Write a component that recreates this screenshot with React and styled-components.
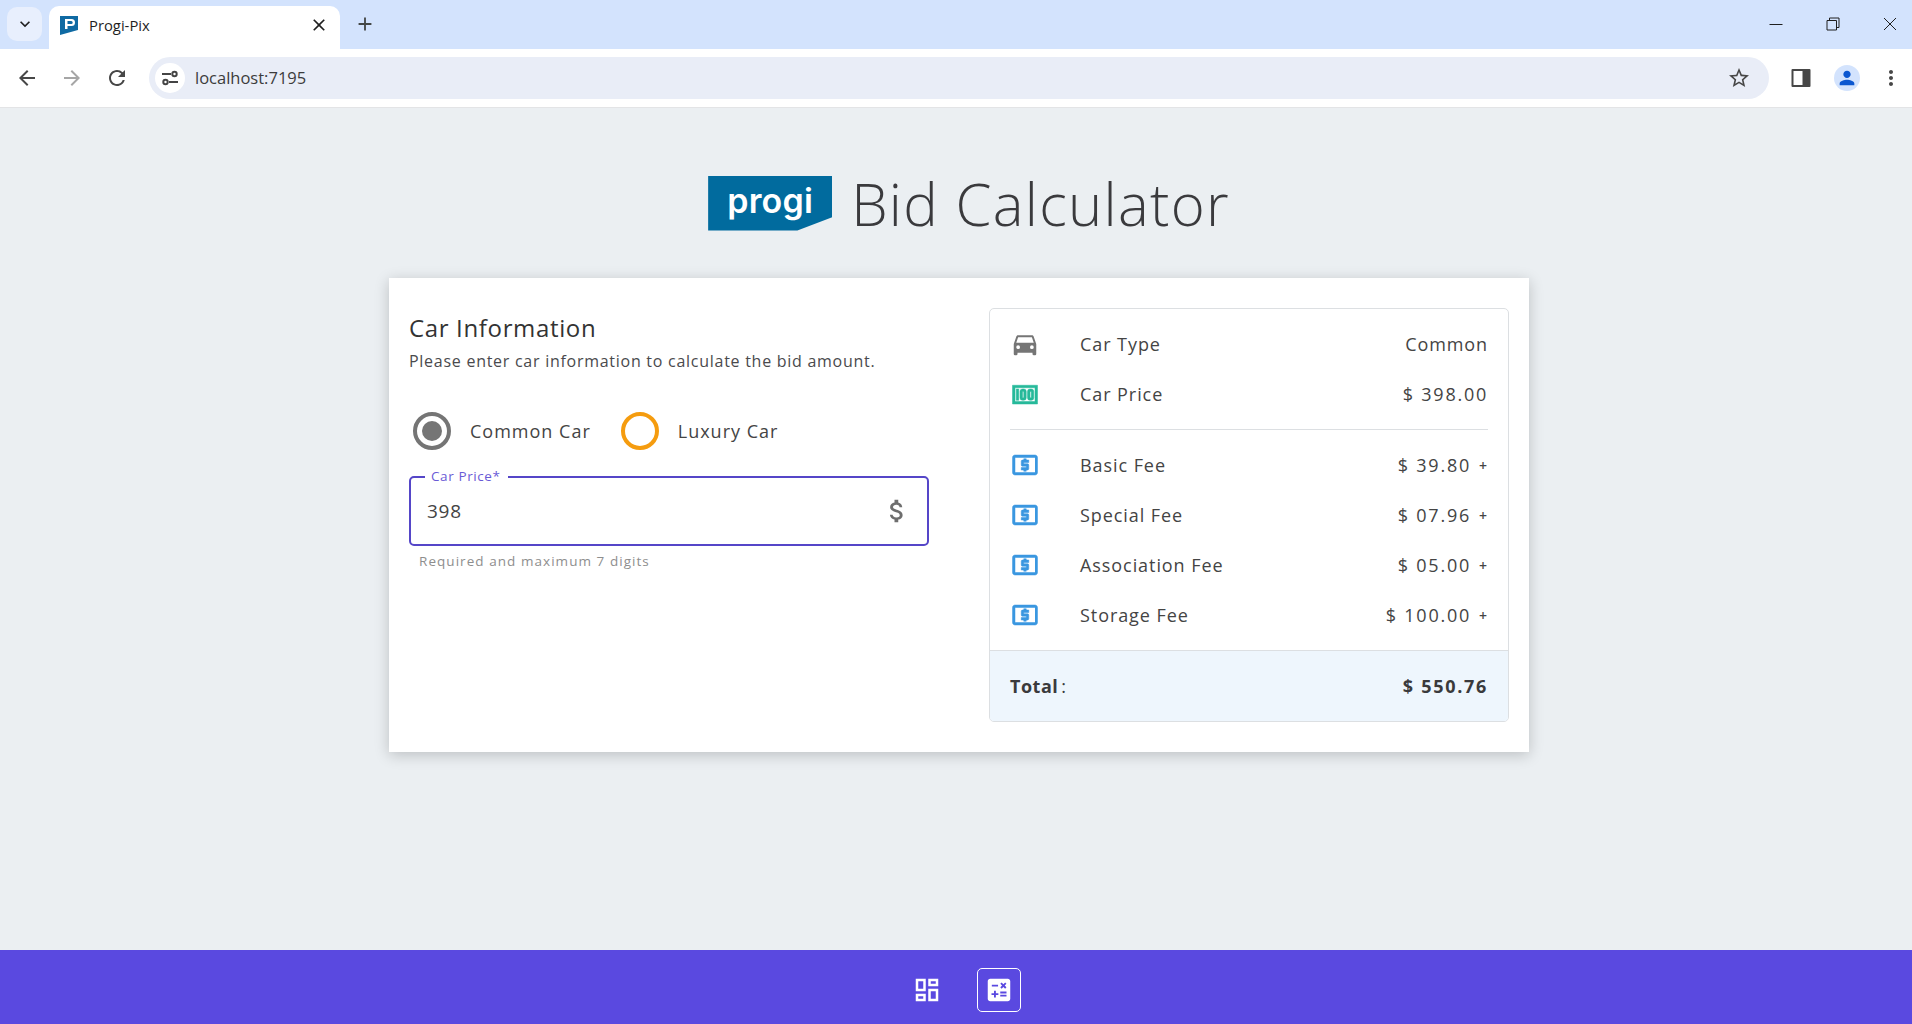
import React from "react";
import styled, { createGlobalStyle } from "styled-components";
import { MdCalculate, MdOutlineDashboard, MdKeyboardArrowDown, MdClose, MdAdd, MdArrowBack, MdArrowForward, MdRefresh, MdStarBorder, MdPerson, MdMoreVert, MdAttachMoney } from "react-icons/md";

const UI = `"Open Sans", "Noto Sans", sans-serif`;

const Global = createGlobalStyle`
  html, body { margin: 0; padding: 0; height: 100%; overflow: hidden; }
  * { box-sizing: border-box; }
  body { font-family: ${UI}; background: #ebeff2; color: #3f3f42; }
`;

const Page = styled.div`
  width: 1912px; height: 1024px;
  display: flex; flex-direction: column; overflow: hidden;
`;

/* browser chrome */
const TabStrip = styled.div`
  height: 49px; background: #d3e3fd;
  display: flex; align-items: flex-end;
  padding-left: 7px;
`;
const TabMenu = styled.div`
  width: 35px; height: 34px; margin-bottom: 8px; border-radius: 10px;
  background: #e8effd; color: #1f1f1f;
  display: flex; align-items: center; justify-content: center; font-size: 20px;
`;
const Tab = styled.div`
  width: 291px; height: 43px; margin-left: 7px;
  background: #fff; border-radius: 10px 10px 0 0;
  display: flex; align-items: center;
  padding: 0 11px 6px 11px;
  color: #1f1f1f;
`;
const TabTitle = styled.span`
  flex: 1; margin-left: 11px; font-family: "Open Sans", sans-serif; font-size: 14.8px;
`;
const NewTab = styled.div`
  margin: 0 0 8px 14px; height: 34px; display: flex; align-items: center; color: #444746; font-size: 22px;
`;
const WindowControls = styled.div`
  margin-left: auto; margin-right: -6px; height: 49px; display: flex; align-items: center; color: #1f1f1f; padding-bottom: 2px;
`;
const WinBtn = styled.div`
  width: 57px; display: flex; justify-content: center; align-items: center;
`;
const Toolbar = styled.div`
  height: 59px; background: #fff; border-bottom: 1px solid #e3e4e6;
  display: flex; align-items: center; padding: 0 0 1px 12px; color: #474747;
`;
const NavIcon = styled.div`
  width: 30px; height: 30px; margin-right: 15px;
  display: flex; align-items: center; justify-content: center;
  font-size: 24px; color: ${p => p.$dim ? "#a6a6a6" : "#474747"};
`;
const Omnibox = styled.div`
  width: 1620px; height: 42px; margin-left: 2px; border-radius: 21px; background: #e9edf7;
  display: flex; align-items: center; padding: 0 18px 0 6px;
`;
const SiteInfo = styled.div`
  width: 30px; height: 30px; border-radius: 50%; background: #fff;
  display: flex; align-items: center; justify-content: center;
`;
const Url = styled.span`
  flex: 1; margin-left: 10px; font-family: "Open Sans", sans-serif; font-size: 16.5px; color: #3c3c3c;
`;
const ToolRight = styled.div`
  display: flex; align-items: center; margin-left: 22px;
`;
const Avatar = styled.div`
  width: 26px; height: 26px; border-radius: 50%; background: #d3e3fd; color: #0b57d0;
  display: flex; align-items: center; justify-content: center; font-size: 22px; margin: 0 19px 0 23px;
`;

/* page */
const Main = styled.main`
  flex: 1; display: flex; flex-direction: column; align-items: center; padding: 65px 0 0 6px;
`;
const Heading = styled.div`
  height: 60px; display: flex; align-items: center; gap: 19px; margin-left: 20px;
`;
const Logo = styled.div`
  width: 124px; height: 55px; background: #016b9e;
  clip-path: polygon(0 0, 100% 0, 100% 76%, 72% 100%, 0 100%);
  display: flex; align-items: center; justify-content: center;
  padding-bottom: 5px;
  color: #fff; font: 600 34px "Inter", sans-serif; letter-spacing: .2px;
`;
const Title = styled.h1`
  margin: 2px 0 0; font-family: ${UI}; font-weight: 300; font-size: 58px; line-height: 60px; color: #3a3a3d;
  letter-spacing: 1.3px;
`;
const Card = styled.section`
  width: 1140px; height: 474px; margin-top: 45px; background: #fff;
  box-shadow: 0 3px 14px rgba(0,0,0,.2);
  display: flex; padding: 30px 20px;
`;
const FormCol = styled.div`
  width: 520px; display: flex; flex-direction: column;
`;
const H2 = styled.h2`
  margin: 4px 0 0; font-family: ${UI}; font-size: 24px; line-height: 32px; font-weight: 500; color: #333;
  letter-spacing: .65px;
`;
const Sub = styled.p`
  margin: 5px 0 0; font-size: 16px; line-height: 24px; color: #4a4a4d; letter-spacing: .73px;
`;
const Radios = styled.div`
  display: flex; margin: 39px 0 0 4px; height: 38px; align-items: center;
`;
const Radio = styled.div`
  width: 38px; height: 38px; border-radius: 50%; border: 4px solid ${p => p.$color};
  display: flex; align-items: center; justify-content: center; flex: none;
`;
const RadioDot = styled.div`
  width: 20px; height: 20px; border-radius: 50%; background: #757575;
`;
const RadioLabel = styled.span`
  margin: 0 30px 0 19px; font-size: 18px; letter-spacing: 1px; color: #444;
`;
const Field = styled.div`
  position: relative; margin-top: 26px; height: 70px;
  border: 2px solid #5546c8; border-radius: 5px;
  display: flex; align-items: center; padding: 0 15px 0 16px;
`;
const FieldLabel = styled.label`
  position: absolute; left: 14px; top: -10px; padding: 0 7px 0 6px; background: #fff;
  font-size: 13.5px; line-height: 16px; color: #6a5bd6; letter-spacing: .6px;
`;
const FieldValue = styled.span`
  flex: 1; font-size: 19px; color: #444; letter-spacing: .7px;
`;
const Helper = styled.div`
  margin: 7px 0 0 10px; font-size: 13.5px; line-height: 16px; color: #8e8e8e; letter-spacing: 1.05px;
`;
const Summary = styled.div`
  width: 520px; margin-left: 60px; height: 414px;
  border: 1px solid #dcdfe2; border-radius: 5px; overflow: hidden;
  display: flex; flex-direction: column;
`;
const Rows = styled.div`
  flex: 1; padding: 10px 20px 0;
`;
const Row = styled.div`
  height: 50px; display: flex; align-items: center; font-size: 18px; letter-spacing: .93px; color: #444;
`;
const RowIcon = styled.svg`
  width: 30px; height: 30px; flex: none; fill: ${p => p.$color};
  stroke: ${p => p.$color}; stroke-width: ${p => p.$bold ? 0.4 : 0};
`;
const RowLabel = styled.span`
  margin-left: 40px; flex: 1;
`;
const RowValue = styled.span`
  letter-spacing: ${p => p.$numeric ? "1.75px" : ".9px"};
`;
const Plus = styled.span`
  font-size: 14px; font-weight: 600; margin-left: 8px; letter-spacing: 0; margin-right: 1px;
`;
const Divider = styled.hr`
  margin: 10px 0 10px; border: 0; border-top: 1px solid #dcdfe2;
`;
const TotalRow = styled.div`
  height: 71px; background: #eef6fd; border-top: 1px solid #dcdfe2;
  display: flex; align-items: center; justify-content: space-between;
  padding: 0 20px 1px; font-size: 18px; font-weight: 700; color: #3a3a3c; letter-spacing: .5px;
`;
const TotalValue = styled.span`
  letter-spacing: 1.7px;
`;
const Colon = styled.span`
  font-weight: 400; margin-left: 3px;
`;
const BottomBar = styled.nav`
  height: 74px; background: #5a49e0;
  display: flex; align-items: center; justify-content: center; color: #fff; gap: 28px; padding: 6px 0 0 14px;
`;
const BarBtn = styled.div`
  width: 44px; height: 44px; border-radius: 5px; border: 1px solid ${p => p.$active ? "#fff" : "transparent"};
  display: flex; align-items: center; justify-content: center; font-size: 30px;
`;

const CAR = "M5,11L6.5,6.5H17.5L19,11M17.5,16A1.5,1.5 0 0,1 16,14.5A1.5,1.5 0 0,1 17.5,13A1.5,1.5 0 0,1 19,14.5A1.5,1.5 0 0,1 17.5,16M6.5,16A1.5,1.5 0 0,1 5,14.5A1.5,1.5 0 0,1 6.5,13A1.5,1.5 0 0,1 8,14.5A1.5,1.5 0 0,1 6.5,16M18.92,6C18.72,5.42 18.16,5 17.5,5H6.5C5.84,5 5.28,5.42 5.08,6L3,12V20A1,1 0 0,0 4,21H5A1,1 0 0,0 6,20V19H18V20A1,1 0 0,0 19,21H20A1,1 0 0,0 21,20V12L18.92,6Z";
const C100 = "M2,5H22V20H2V5M20,18V7H4V18H20M17,8A2,2 0 0,1 19,10V15A2,2 0 0,1 17,17H16A2,2 0 0,1 14,15V10A2,2 0 0,1 16,8H17M17,10H16V15H17V10M11,8A2,2 0 0,1 13,10V15A2,2 0 0,1 11,17H10A2,2 0 0,1 8,15V10A2,2 0 0,1 10,8H11M11,10H10V15H11V10M5,8H7V17H5V8Z";
const USD = "M20 18H4V6H20M20 4H4C2.89 4 2 4.89 2 6V18C2 19.11 2.9 20 4 20H20C21.11 20 22 19.11 22 18V6C22 4.89 21.11 4 20 4M11 17H13V16H14C14.55 16 15 15.55 15 15V12C15 11.45 14.55 11 14 11H11V10H15V8H13V7H11V8H10C9.45 8 9 8.45 9 9V12C9 12.55 9.45 13 10 13H13V14H9V16H11V17Z";

const fees = [
  ["Basic Fee", "$ 39.80"],
  ["Special Fee", "$ 07.96"],
  ["Association Fee", "$ 05.00"],
  ["Storage Fee", "$ 100.00"],
];

const SummaryRow = ({ d, color, label, value, plus, numeric, bold }) => (
  <Row>
    <RowIcon $color={color} $bold={bold} viewBox="0 0 24 24"><path d={d} /></RowIcon>
    <RowLabel>{label}</RowLabel>
    <RowValue $numeric={numeric}>{value}</RowValue>
    {plus && <Plus>+</Plus>}
  </Row>
);

export default function App() {
  return (
    <Page>
      <Global />
      <TabStrip>
        <TabMenu><MdKeyboardArrowDown /></TabMenu>
        <Tab>
          <svg width="18" height="20" viewBox="0 0 18 20">
            <path d="M0 1H18V15L0 20Z" fill="#0f6aa3" />
            <path d="M5 4H11.5a3.5 3.5 0 0 1 0 7H7.5V14H5ZM7.5 6V9H11.2a1.5 1.5 0 0 0 0-3Z" fill="#fff" />
          </svg>
          <TabTitle>Progi-Pix</TabTitle>
          <MdClose size={20} color="#1f1f1f" />
        </Tab>
        <NewTab><MdAdd /></NewTab>
        <WindowControls>
          <WinBtn><svg width="14" height="14" viewBox="0 0 14 14"><path d="M0.5 7.5H13.5" stroke="#1f1f1f" fill="none" /></svg></WinBtn>
          <WinBtn><svg width="14" height="14" viewBox="0 0 14 14"><path d="M1 3.5H10.5V13H1ZM3.5 3.5V1H13V10.5H10.5" stroke="#1f1f1f" fill="none" /></svg></WinBtn>
          <WinBtn><svg width="14" height="14" viewBox="0 0 14 14"><path d="M1 1L13 13M13 1L1 13" stroke="#1f1f1f" fill="none" /></svg></WinBtn>
        </WindowControls>
      </TabStrip>
      <Toolbar>
        <NavIcon><MdArrowBack /></NavIcon>
        <NavIcon $dim><MdArrowForward /></NavIcon>
        <NavIcon><MdRefresh /></NavIcon>
        <Omnibox>
          <SiteInfo>
            <svg width="18" height="18" viewBox="0 0 18 18">
              <path d="M1 5H10M8 13H17" stroke="#444" strokeWidth="2" fill="none" />
              <circle cx="13.5" cy="5" r="2.2" stroke="#444" strokeWidth="2" fill="none" />
              <circle cx="4.5" cy="13" r="2.2" stroke="#444" strokeWidth="2" fill="none" />
            </svg>
          </SiteInfo>
          <Url>localhost:7195</Url>
          <MdStarBorder size={24} color="#474747" />
        </Omnibox>
        <ToolRight>
          <svg width="20" height="20" viewBox="0 0 20 20">
            <path d="M1.5 1H18.5a1 1 0 0 1 1 1V18a1 1 0 0 1-1 1H1.5a1 1 0 0 1-1-1V2a1 1 0 0 1 1-1Z" fill="#474747" />
            <rect x="2.5" y="3" width="9" height="14" fill="#fff" />
          </svg>
          <Avatar><MdPerson /></Avatar>
          <MdMoreVert size={24} color="#474747" />
        </ToolRight>
      </Toolbar>

      <Main>
        <Heading>
          <Logo>progi</Logo>
          <Title>Bid Calculator</Title>
        </Heading>
        <Card>
          <FormCol>
            <H2>Car Information</H2>
            <Sub>Please enter car information to calculate the bid amount.</Sub>
            <Radios>
              <Radio $color="#757575"><RadioDot /></Radio>
              <RadioLabel>Common Car</RadioLabel>
              <Radio $color="#f59c0f" />
              <RadioLabel>Luxury Car</RadioLabel>
            </Radios>
            <Field>
              <FieldLabel>Car Price*</FieldLabel>
              <FieldValue>398</FieldValue>
              <MdAttachMoney size={30} color="#6e6e6e" />
            </Field>
            <Helper>Required and maximum 7 digits</Helper>
          </FormCol>
          <Summary>
            <Rows>
              <SummaryRow d={CAR} color="#757575" label="Car Type" value="Common" />
              <SummaryRow d={C100} color="#26b99a" label="Car Price" value="$ 398.00" numeric bold />
              <Divider />
              {fees.map(([l, v]) => (
                <SummaryRow key={l} d={USD} color="#3a97e0" label={l} value={v} plus numeric bold />
              ))}
            </Rows>
            <TotalRow>
              <span>Total<Colon>:</Colon></span>
              <TotalValue>$ 550.76</TotalValue>
            </TotalRow>
          </Summary>
        </Card>
      </Main>

      <BottomBar>
        <BarBtn><MdOutlineDashboard /></BarBtn>
        <BarBtn $active><MdCalculate /></BarBtn>
      </BottomBar>
    </Page>
  );
}
